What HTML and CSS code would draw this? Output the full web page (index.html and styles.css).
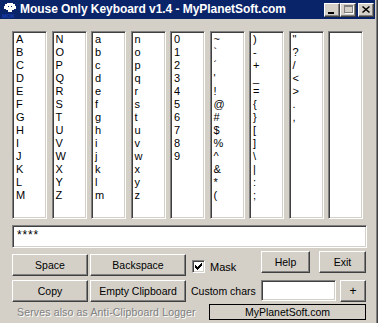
FILE: index.html
```html
<!DOCTYPE html>
<html>
<head>
<meta charset="utf-8">
<link rel="stylesheet" href="styles.css">
</head>
<body>
<div class="window">
  <div class="titlebar">
    <svg class="app-icon" width="16" height="16" viewBox="0 0 16 16">
      <path d="M5 1h6v1h2v2h1v3h-2v1h-2v2h-4v-2h-2v-1h-2v-3h1v-2h2z" fill="#fff"/>
      <rect x="6" y="4" width="1" height="1" fill="#0a246a"/>
      <rect x="9" y="4" width="1" height="1" fill="#0a246a"/>
      <text x="0" y="15.5" font-size="5.5" font-family="Liberation Sans" font-weight="bold" fill="#1a3cb0">MOK</text>
    </svg>
    <span class="title">Mouse Only Keyboard v1.4 - MyPlanetSoft.com</span>
    <div class="caption-buttons">
      <span class="cap"><svg width="14" height="12" viewBox="0 0 14 12"><rect x="3" y="8" width="6" height="2" fill="#000"/></svg></span>
      <span class="cap"><svg width="14" height="12" viewBox="0 0 14 12"><path d="M3 1h9v8h-9z M4 3v5h7v-5z" fill="#808080" fill-rule="evenodd"/><path d="M12 2h1v8h-9v-1h8z" fill="#fff"/></svg></span>
      <span class="cap cap-close"><svg width="14" height="12" viewBox="0 0 14 12"><path d="M3.5 2.5l7 6M10.5 2.5l-7 6" stroke="#000" stroke-width="1.6"/></svg></span>
    </div>
  </div>
  <div class="client">
    <div class="lists">
      <ul class="listbox"><li>A</li><li>B</li><li>C</li><li>D</li><li>E</li><li>F</li><li>G</li><li>H</li><li>I</li><li>J</li><li>K</li><li>L</li><li>M</li></ul>
      <ul class="listbox"><li>N</li><li>O</li><li>P</li><li>Q</li><li>R</li><li>S</li><li>T</li><li>U</li><li>V</li><li>W</li><li>X</li><li>Y</li><li>Z</li></ul>
      <ul class="listbox"><li>a</li><li>b</li><li>c</li><li>d</li><li>e</li><li>f</li><li>g</li><li>h</li><li>i</li><li>j</li><li>k</li><li>l</li><li>m</li></ul>
      <ul class="listbox"><li>n</li><li>o</li><li>p</li><li>q</li><li>r</li><li>s</li><li>t</li><li>u</li><li>v</li><li>w</li><li>x</li><li>y</li><li>z</li></ul>
      <ul class="listbox"><li>0</li><li>1</li><li>2</li><li>3</li><li>4</li><li>5</li><li>6</li><li>7</li><li>8</li><li>9</li></ul>
      <ul class="listbox"><li>~</li><li>`</li><li>´</li><li>'</li><li>!</li><li>@</li><li>#</li><li>$</li><li>%</li><li>^</li><li>&amp;</li><li>*</li><li>(</li></ul>
      <ul class="listbox"><li>)</li><li>-</li><li>+</li><li>_</li><li>=</li><li>{</li><li>}</li><li>[</li><li>]</li><li>\</li><li>|</li><li>:</li><li>;</li></ul>
      <ul class="listbox"><li>"</li><li>?</li><li>/</li><li>&lt;</li><li>&gt;</li><li>.</li><li>,</li></ul>
      <ul class="listbox"></ul>
    </div>
    <div class="textbox">****</div>
    <div class="row row-a">
      <span class="btn btn-w1 btn-low">Space</span>
      <span class="btn btn-w2 btn-low">Backspace</span>
      <span class="check-group">
        <span class="checkbox"><svg width="7" height="7" viewBox="0 0 7 7"><path d="M0 2h1v3h-1z M1 3h1v3h-1z M2 4h1v3h-1z M3 3h1v3h-1z M4 2h1v3h-1z M5 1h1v3h-1z M6 0h1v3h-1z" fill="#000"/></svg></span>
        <span class="check-label">Mask</span>
      </span>
      <span class="btn btn-help">Help</span>
      <span class="btn btn-exit">Exit</span>
    </div>
    <div class="row row-b">
      <span class="btn btn-w1">Copy</span>
      <span class="btn btn-w2">Empty Clipboard</span>
      <span class="label">Custom chars</span>
      <span class="input"></span>
      <span class="btn btn-plus">+</span>
    </div>
    <div class="row row-c">
      <span class="note">Serves also as Anti-Clipboard Logger</span>
      <span class="site">MyPlanetSoft.com</span>
    </div>
  </div>
</div>
</body>
</html>
```

FILE: styles.css
```css
* { box-sizing: border-box; }
html, body { margin: 0; padding: 0; background: #d4d0c8; }
body {
  font-family: "Liberation Sans", Arial, sans-serif;
  font-size: 10.5px;
  color: #000;
}
.window {
  width: 378px;
  height: 323px;
  background: #d4d0c8;
  border-right: 1px solid #404040;
  padding-right: 2px;
  box-shadow: inset -1px 0 #808080;
  overflow: hidden;
}
.titlebar {
  height: 19px;
  background: #0a246a;
  display: flex;
  align-items: center;
  padding-left: 2px;
}
.app-icon { display: block; flex: none; }
.title {
  margin-left: 2px;
  color: #fff;
  font-weight: bold;
  font-size: 12px;
  letter-spacing: -0.05px;
  white-space: nowrap;
  line-height: 19px;
}
.caption-buttons {
  margin-left: auto;
  margin-right: 1px;
  display: flex;
  align-self: flex-start;
  margin-top: 3px;
}
.cap {
  width: 16px;
  height: 14px;
  background: #d4d0c8;
  border: 1px solid;
  border-color: #fff #404040 #404040 #fff;
  box-shadow: inset -1px -1px #808080;
  display: block;
}
.cap svg { display: block; }
.cap-close { margin-left: 2px; }
.client { padding-left: 12px; }
.lists {
  margin-top: 12px;
  display: grid;
  grid-template-columns: repeat(9, 35px);
  column-gap: 4.5px;
}
.listbox {
  list-style: none;
  margin: 0;
  padding: 0 0 0 2px;
  height: 188px;
  background: #fff;
  border: 1px solid;
  border-color: #808080 #fff #fff #808080;
  box-shadow: inset 1px 1px #404040, inset -1px -1px #d4d0c8;
  padding-top: 1px;
  font-size: 11px;
}
.listbox li {
  height: 13px;
  line-height: 13px;
  padding-left: 1px;
}
.textbox {
  margin-top: 6px;
  width: 355px;
  height: 23px;
  background: #fff;
  border: 1px solid;
  border-color: #808080 #fff #fff #808080;
  box-shadow: inset 1px 1px #404040, inset -1px -1px #d4d0c8;
  padding: 2px 0 0 4px;
  font-size: 12px;
  line-height: 14px;
  letter-spacing: 0.8px;
}
.row { display: flex; width: 354px; }
.row-a { margin-top: 3px; height: 25px; align-items: flex-start; }
.row-b { margin-top: 4px; height: 22px; align-items: flex-start; }
.row-c { margin-top: 2px; height: 16px; align-items: center; }
.btn {
  display: flex;
  align-items: center;
  justify-content: center;
  height: 22px;
  background: #d4d0c8;
  border: 1px solid;
  border-color: #fff #404040 #404040 #fff;
  box-shadow: inset -1px -1px #808080;
  white-space: nowrap;
  flex: none;
}
.btn-low { margin-top: 3px; }
.btn-w1 { width: 76px; }
.btn-w2 { width: 96px; margin-left: 2px; }
.check-group { display: flex; align-items: center; margin-left: 6px; margin-top: 9px; }
.checkbox {
  width: 13px;
  height: 13px;
  background: #fff;
  border: 1px solid;
  border-color: #808080 #fff #fff #808080;
  box-shadow: inset 1px 1px #404040, inset -1px -1px #d4d0c8;
  display: flex;
  padding: 2px 0 0 2px;
}
.checkbox svg { display: block; }
.check-label { margin-left: 5px; font-size: 11px; }
.btn-help { width: 49px; margin-left: auto; }
.btn-exit { width: 47px; margin-left: 9px; }
.label { margin-left: 5px; align-self: center; }
.input {
  margin-left: auto;
  width: 75px;
  height: 21px;
  background: #fff;
  border: 1px solid;
  border-color: #808080 #fff #fff #808080;
  box-shadow: inset 1px 1px #404040, inset -1px -1px #d4d0c8;
}
.btn-plus { width: 26px; margin-left: 4px; font-size: 12px; }
.note {
  padding-left: 5px;
  color: #808080;
  text-shadow: 1px 1px #fff;
  white-space: nowrap;
  letter-spacing: 0.15px;
}
.site {
  margin-left: auto;
  width: 157px;
  height: 16px;
  border: 1px solid #000;
  display: flex;
  align-items: center;
  justify-content: center;
}
```
